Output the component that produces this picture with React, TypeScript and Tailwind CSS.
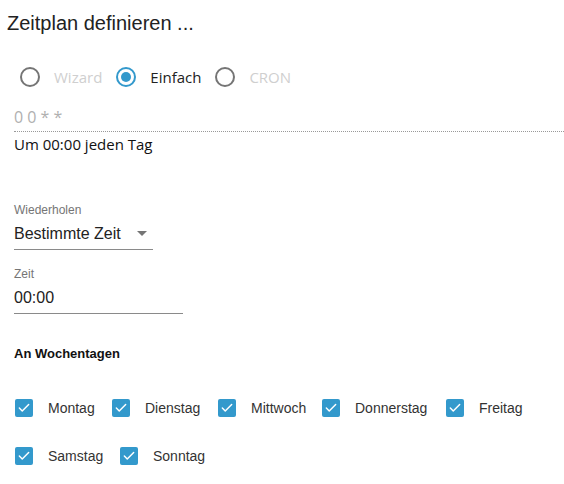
import { Check } from "lucide-react";

const days1 = [
  { label: "Montag", box: "w-[97px]" },
  { label: "Dienstag", box: "w-[106px]" },
  { label: "Mittwoch", box: "w-[104px]" },
  { label: "Donnerstag", box: "w-[124px]" },
  { label: "Freitag", box: "w-[90px]" },
];

const days2 = [
  { label: "Samstag", box: "w-[105px]" },
  { label: "Sonntag", box: "w-[100px]" },
];

function Radio({ label, checked }: { label: string; checked?: boolean }) {
  return (
    <div className="flex items-center">
      <span
        className={
          checked
            ? "flex h-[20px] w-[20px] items-center justify-center rounded-full border-2 border-[#3399cc]"
            : "flex h-[20px] w-[20px] items-center justify-center rounded-full border-2 border-[#757575]"
        }
      >
        {checked && <span className="h-[10px] w-[10px] rounded-full bg-[#3399cc]" />}
      </span>
      <span
        className={
          checked
            ? "ml-[14px] mr-[14px] text-[15px] text-[#222]"
            : "ml-[14px] mr-[14px] text-[15px] text-[#cfcfcf]"
        }
      >
        {label}
      </span>
    </div>
  );
}

function Day({ label, box }: { label: string; box: string }) {
  return (
    <div className={`flex items-center ${box}`}>
      <span className="flex h-[18px] w-[18px] items-center justify-center rounded-[2px] bg-[#3399cc]">
        <Check size={14} strokeWidth={2.5} color="white" />
      </span>
      <span className="ml-[15px] text-[14px] text-[#333] [font-family:'Liberation_Sans',Arial,sans-serif]">
        {label}
      </span>
    </div>
  );
}

export default function App() {
  return (
    <div className="min-h-[484px] w-[564px] bg-white text-[#222] [font-family:'Open_Sans','Noto_Sans',sans-serif]">
      <h1 className="pl-[7px] pt-[10px] text-[20px] leading-[26px] text-[#222] [font-family:'Liberation_Sans',Arial,sans-serif]">
        Zeitplan definieren ...
      </h1>

      <div className="mt-[30px] flex items-center pl-[20px]">
        <Radio label="Wizard" />
        <Radio label="Einfach" checked />
        <Radio label="CRON" />
      </div>

      <div className="ml-[14px] mt-[17px]">
        <div className="border-b border-dotted border-[#999] pb-[3px] text-[16px] leading-[22px] text-[#b0b0b0]">
          0 0 * *
        </div>
        <div className="mt-[1px] text-[15px] leading-[22px] text-[#111]">Um 00:00 jeden Tag</div>
      </div>

      <div className="ml-[14px] mt-[48px] [font-family:'Liberation_Sans',Arial,sans-serif]">
        <div className="text-[12px] leading-[14px] text-[#757575]">Wiederholen</div>
        <div className="mt-[6px] flex w-[139px] items-center justify-between border-b border-[#8a8a8a] pb-[4px]">
          <span className="text-[16px] leading-[22px] text-[#222]">Bestimmte Zeit</span>
          <span className="mr-[6px] h-0 w-0 border-x-[5px] border-t-[5px] border-x-transparent border-t-[#757575]" />
        </div>

        <div className="mt-[17px] text-[12px] leading-[14px] text-[#757575]">Zeit</div>
        <div className="mt-[6px] w-[169px] border-b border-[#8a8a8a] pb-[4px] text-[16px] leading-[22px] text-[#222]">
          00:00
        </div>

        <div className="mt-[32px] text-[13px] font-bold leading-[16px] text-[#111]">An Wochentagen</div>
      </div>

      <div className="ml-[15px] mt-[36px] flex flex-col gap-[27px]">
        <div className="flex">
          {days1.map((d) => (
            <Day key={d.label} label={d.label} box={d.box} />
          ))}
        </div>
        <div className="flex">
          {days2.map((d) => (
            <Day key={d.label} label={d.label} box={d.box} />
          ))}
        </div>
      </div>
    </div>
  );
}
